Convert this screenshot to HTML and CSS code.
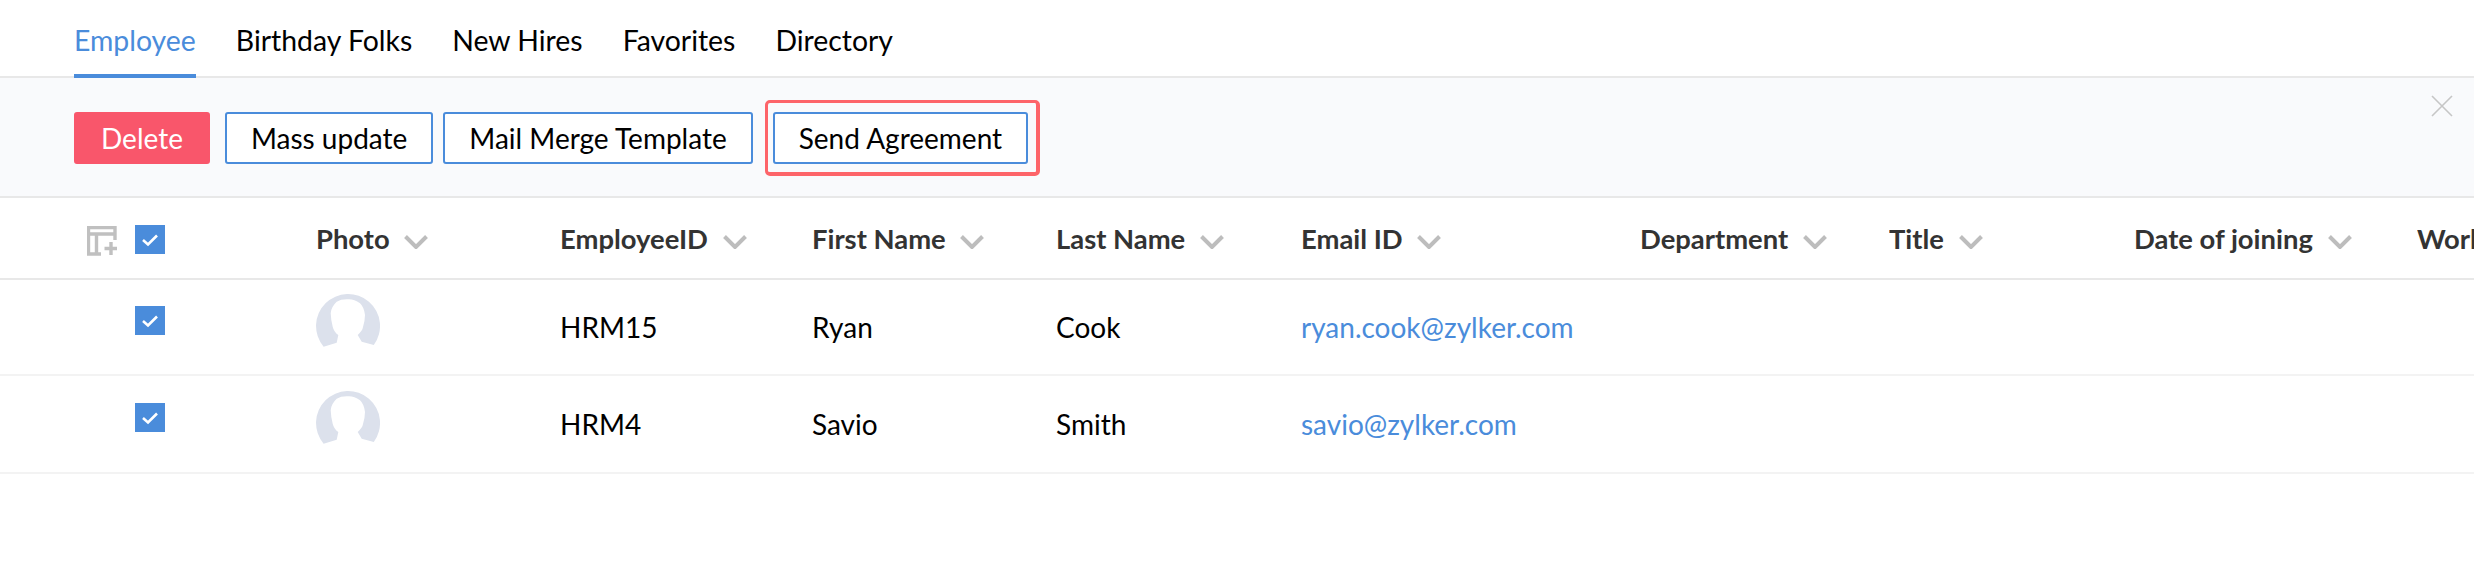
FILE: index.html
```html
<!DOCTYPE html>
<html lang="en">
<head>
    <meta charset="UTF-8">
    <title>Employee</title>
    <link rel="stylesheet" href="styles.css">
</head>
<body>
    <svg class="defs" width="0" height="0">
        <symbol id="chevron" viewBox="0 0 24 14">
            <path d="M1.500 1.500L12 12 22.500 1.500" fill="none" stroke="#bdbdbd" stroke-width="4"/>
        </symbol>
        <symbol id="check" viewBox="0 0 30 29">
            <path d="M8 15l5 4.500 9-9" fill="none" stroke="#fff" stroke-width="2.600"/>
        </symbol>
        <symbol id="avatar" viewBox="0 0 64 54">
            <path fill="#dce1ec" d="M7.600 52.700A32 32 0 1 1 57.800 51L45.700 47.700 41.700 41Q46 37 46.700 34.300 49 27 49 21 48 13 44 9.300 38 5 32.300 5.300 25 5 20.700 7.700 15 13 14.700 19.300 15 27 16.700 32.700 18 38 22.300 41L20.700 48.700z"/>
        </symbol>
    </svg>

    <nav class="tabs">
        <a class="tab active">Employee</a>
        <a class="tab">Birthday Folks</a>
        <a class="tab">New Hires</a>
        <a class="tab">Favorites</a>
        <a class="tab">Directory</a>
    </nav>

    <div class="action-bar">
        <button class="btn btn-danger">Delete</button>
        <button class="btn">Mass update</button>
        <button class="btn">Mail Merge Template</button>
        <span class="highlight"><button class="btn">Send Agreement</button></span>
        <svg class="close" viewBox="0 0 22 22"><path d="M1 1l20 20M21 1L1 21" fill="none" stroke="#c6c6c6" stroke-width="1.600"/></svg>
    </div>

    <div class="row head">
        <div class="select">
            <svg class="add-col" viewBox="0 0 30 30">
                <path d="M28 14V1.500H1.500V28H14M1.500 8H28M9.500 8V28" fill="none" stroke="#c0c0c0" stroke-width="3.400"/>
                <path d="M24 16v13M17.500 22.500h13" fill="none" stroke="#c0c0c0" stroke-width="3.400"/>
            </svg>
            <span class="checkbox"><svg><use href="#check"/></svg></span>
        </div>
        <div class="cell">Photo <svg class="chevron"><use href="#chevron"/></svg></div>
        <div class="cell">EmployeeID <svg class="chevron"><use href="#chevron"/></svg></div>
        <div class="cell">First Name <svg class="chevron"><use href="#chevron"/></svg></div>
        <div class="cell">Last Name <svg class="chevron"><use href="#chevron"/></svg></div>
        <div class="cell">Email ID <svg class="chevron"><use href="#chevron"/></svg></div>
        <div class="cell">Department <svg class="chevron"><use href="#chevron"/></svg></div>
        <div class="cell">Title <svg class="chevron"><use href="#chevron"/></svg></div>
        <div class="cell">Date of joining <svg class="chevron"><use href="#chevron"/></svg></div>
        <div class="cell">Work</div>
    </div>

    <div class="row first">
        <div class="select"><span class="checkbox"><svg><use href="#check"/></svg></span></div>
        <div class="cell"><svg class="avatar"><use href="#avatar"/></svg></div>
        <div class="cell">HRM15</div>
        <div class="cell">Ryan</div>
        <div class="cell">Cook</div>
        <div class="cell"><a class="mail">ryan.cook@zylker.com</a></div>
    </div>

    <div class="row">
        <div class="select"><span class="checkbox"><svg><use href="#check"/></svg></span></div>
        <div class="cell"><svg class="avatar"><use href="#avatar"/></svg></div>
        <div class="cell">HRM4</div>
        <div class="cell">Savio</div>
        <div class="cell">Smith</div>
        <div class="cell"><a class="mail">savio@zylker.com</a></div>
    </div>
</body>
</html>
```

FILE: styles.css
```css
html, body {
    margin: 0;
    height: 562px;
    overflow: hidden;
    background-color: #fff;
}
body {
    font-family: 'Lato', sans-serif;
    font-size: 28px;
    color: #000;
}
.defs {
    display: block;
}
.tabs {
    display: flex;
    gap: 40px;
    height: 76px;
    padding-left: 74px;
    border-bottom: 2px solid #e8e8e8;
    font-size: 28.400px;
}
.tab {
    height: 78px;
    box-sizing: border-box;
    padding-top: 22px;
    line-height: 36px;
}
.tab.active {
    color: #4a8cdb;
    border-bottom: 4px solid #4a8cdb;
}
.action-bar {
    position: relative;
    display: flex;
    align-items: flex-start;
    height: 120px;
    padding: 34px 0 0 74px;
    box-sizing: border-box;
    background-color: #f9fafc;
    border-bottom: 2px solid #e8e8e8;
}
.btn {
    height: 52px;
    padding: 0 24px;
    margin-right: 10px;
    font: inherit;
    color: #000;
    background-color: #fff;
    border: 2px solid #4a8cdb;
    border-radius: 3px;
}
.btn-danger {
    padding: 0 25px;
    margin-right: 15px;
    color: #fff;
    background-color: #f9566b;
    border-color: #f9566b;
}
.highlight {
    display: flex;
    margin: -12px 0 0 2px;
    padding: 9px 8px 8px 5px;
    border: 4px solid #fd6469;
    border-width: 3px 4px 4px 3px;
    border-radius: 5px;
}
.highlight .btn {
    margin-right: 0;
}
.close {
    position: absolute;
    top: 17px;
    right: 21px;
    width: 22px;
    height: 22px;
}
.row {
    display: grid;
    grid-template-columns: 316px 244px 252px 244px 245px 339px 249px 245px 283px 57px;
    align-items: center;
    height: 98px;
    box-sizing: border-box;
    border-bottom: 2px solid #f3f3f3;
}
.row.first {
    height: 96px;
}
.row.head {
    height: 82px;
    border-bottom-color: #e8e8e8;
    font-weight: 700;
    font-size: 27.400px;
    color: #333;
}
.select {
    position: relative;
    display: flex;
    padding-left: 135px;
    margin-bottom: 14px;
}
.head .select {
    margin-bottom: -2px;
}
.add-col {
    position: absolute;
    left: 87px;
    top: 1px;
    width: 30px;
    height: 30px;
}
.checkbox {
    display: block;
    width: 30px;
    height: 29px;
    background-color: #4a8cdb;
}
.checkbox svg {
    display: block;
    width: 30px;
    height: 29px;
}
.cell {
    white-space: nowrap;
    overflow: hidden;
}
.chevron {
    width: 24px;
    height: 14px;
    margin-left: 8px;
}
.avatar {
    display: block;
    width: 64px;
    height: 54px;
    margin-bottom: 13px;
}
.mail {
    color: #4a8cdb;
}
```
